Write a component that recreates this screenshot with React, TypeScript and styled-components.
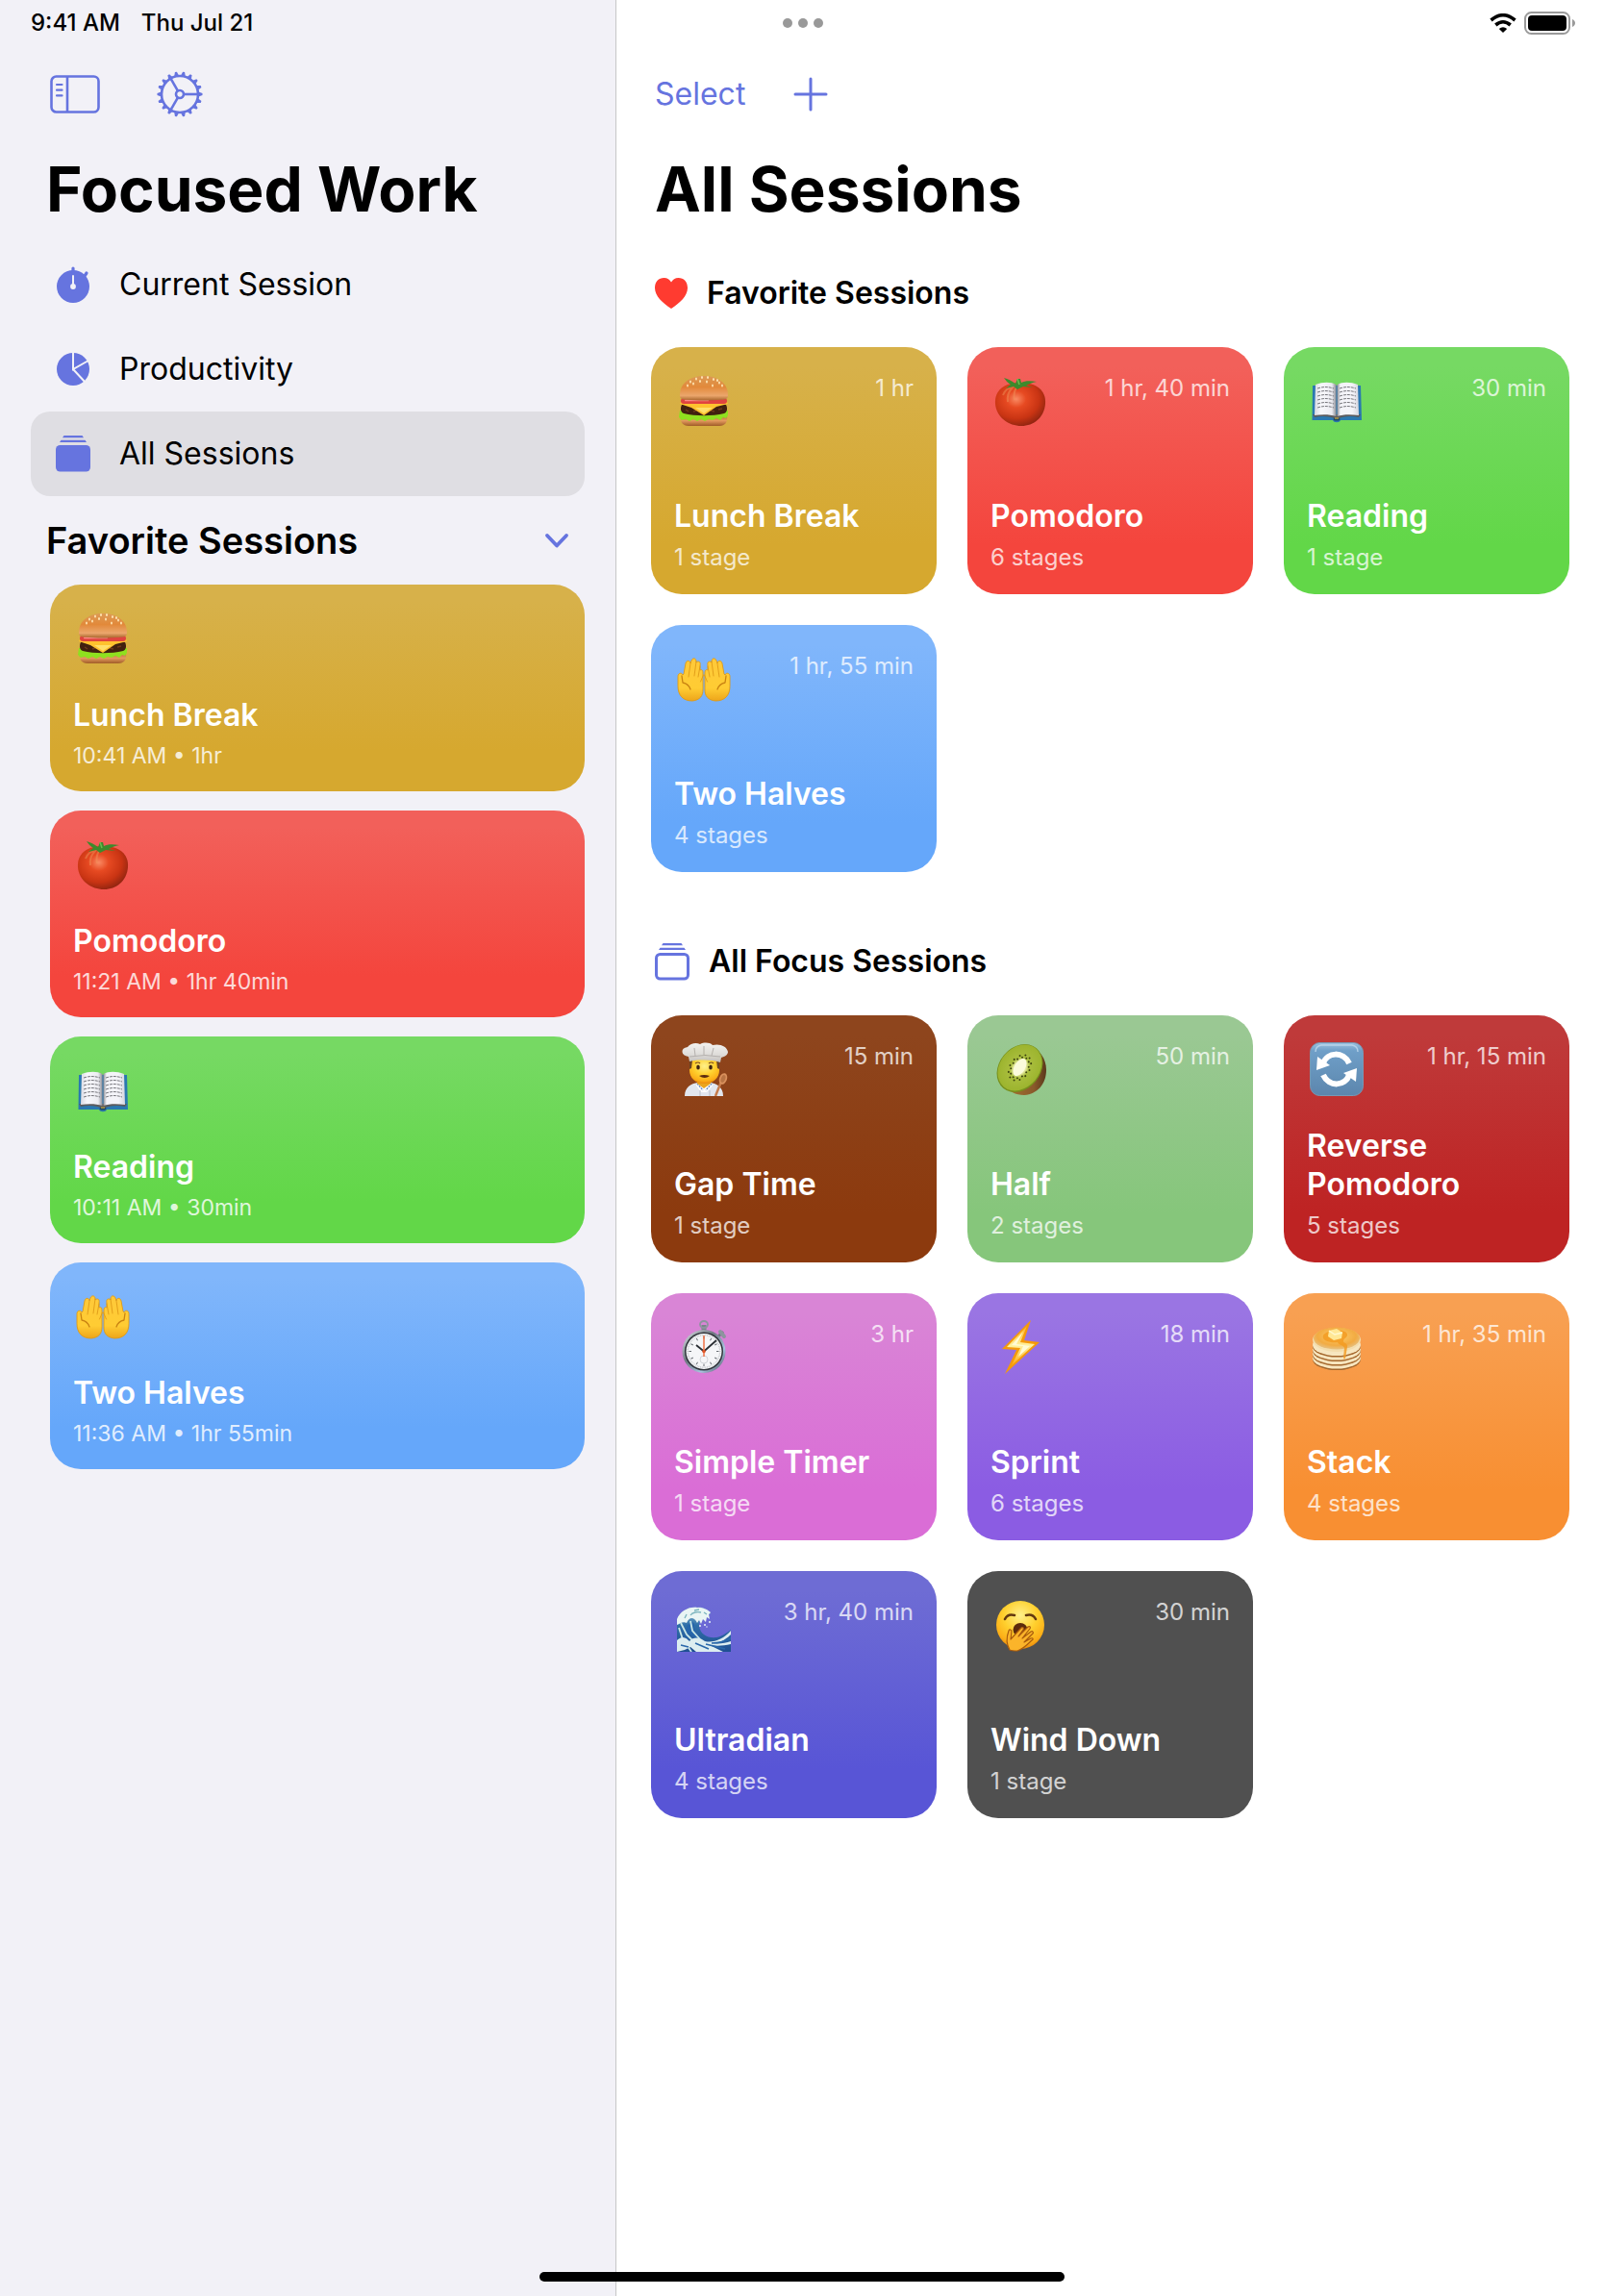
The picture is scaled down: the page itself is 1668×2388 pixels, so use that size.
import React from "react";
import styled, { createGlobalStyle } from "styled-components";

const accent = "#6674df";

const GlobalStyle = createGlobalStyle`
  *, *::before, *::after { box-sizing: border-box; }
  body {
    margin: 0;
    background: #ffffff;
    color: #000000;
    font-family: Inter, "Liberation Sans", sans-serif;
  }
  h1, h2, p, ul { margin: 0; padding: 0; }
  ul { list-style: none; }
  button { font: inherit; color: inherit; border: 0; padding: 0; background: none; cursor: pointer; }
  a { color: inherit; text-decoration: none; }
  svg { display: block; flex: none; }
`;

const Page = styled.div`
  display: grid;
  grid-template-columns: minmax(0, 641px) minmax(0, 1fr);
  grid-template-rows: 48px auto;
  min-height: 100vh;
`;

const StatusBar = styled.header`
  grid-area: 1 / 1 / 2 / 3;
  z-index: 1;
  display: grid;
  grid-template-columns: 1fr auto 1fr;
  align-items: center;
  padding: 0 30px 0 32px;
  font-size: 24px;
  font-weight: 500;
  line-height: 30px;
`;

const Clock = styled.div`
  display: flex;
  gap: 22px;
`;

const MoreButton = styled.button`
  display: flex;
  gap: 6px;
`;

const Dot = styled.span`
  width: 10px;
  height: 10px;
  border-radius: 50%;
  background: #999999;
`;

const Indicators = styled.div`
  display: flex;
  align-items: center;
  justify-content: flex-end;
  gap: 8px;
`;

const Sidebar = styled.aside`
  grid-area: 1 / 1 / 3 / 2;
  padding: 48px 32px 0;
  background: #f2f1f7;
  border-right: 1px solid #c6c6c8;
`;

const Main = styled.main`
  grid-area: 1 / 2 / 3 / 3;
  padding: 48px 36px 0;
`;

const Toolbar = styled.div<{ $inset: number; $gap: number }>`
  display: flex;
  align-items: center;
  gap: ${(p) => p.$gap}px;
  height: 100px;
  padding-left: ${(p) => p.$inset}px;
  color: ${accent};
`;

const ToolButton = styled.button`
  display: block;
  font-size: 32px;
  line-height: 40px;
  color: ${accent};
`;

const Title = styled.h1<{ $inset: number }>`
  padding-left: ${(p) => p.$inset}px;
  font-size: 64px;
  font-weight: 700;
  line-height: 98px;
  white-space: nowrap;
`;

const Nav = styled.nav`
  padding-top: 6px;
`;

const NavLink = styled.a<{ $active?: boolean }>`
  display: flex;
  align-items: center;
  gap: 30px;
  height: 88px;
  padding-left: 26px;
  border-radius: 20px;
  font-size: 32px;
  line-height: 40px;
  background: ${(p) => (p.$active ? "#dfdee3" : "transparent")};

  svg { color: ${accent}; }
`;

const Disclosure = styled.button`
  display: flex;
  align-items: center;
  justify-content: space-between;
  width: 100%;
  height: 92px;
  padding: 0 16px;
  font-size: 38px;
  font-weight: 600;
  line-height: 48px;

  svg { color: ${accent}; }
`;

const SidebarList = styled.ul`
  display: grid;
  gap: 20px;
  padding-left: 20px;
`;

const Section = styled.section`
  & + & { margin-top: 34px; }
`;

const SectionHeader = styled.div`
  display: flex;
  align-items: center;
  gap: 20px;
  height: 115px;
  padding: 2px 0 0 4px;
  color: ${accent};
`;

const SectionTitle = styled.h2`
  font-size: 32px;
  font-weight: 600;
  line-height: 40px;
  color: #000000;
`;

const CardGrid = styled.ul`
  display: grid;
  grid-template-columns: repeat(3, minmax(0, 1fr));
  gap: 32px;
`;

const Card = styled.button<{ $from: string; $to: string; $height: number }>`
  display: flex;
  flex-direction: column;
  justify-content: space-between;
  width: 100%;
  min-height: ${(p) => p.$height}px;
  padding: 28px 24px 23px;
  border-radius: 32px;
  background: linear-gradient(${(p) => p.$from} 8%, ${(p) => p.$to} 80%);
  color: #ffffff;
  text-align: left;
`;

const CardTop = styled.span`
  display: flex;
  justify-content: space-between;
  align-items: flex-start;
  padding-left: 3px;
`;

const CardText = styled.span`
  display: flex;
  flex-direction: column;
  gap: 8px;
`;

const CardName = styled.span`
  font-size: 32px;
  font-weight: 600;
  line-height: 40px;
`;

const CardMeta = styled.span`
  font-size: 24px;
  line-height: 30px;
  opacity: 0.75;
`;

const CardTime = styled.span`
  font-size: 23px;
  line-height: 28px;
  opacity: 0.8;
`;

const HomeIndicator = styled.div`
  position: fixed;
  left: 50%;
  bottom: 15px;
  width: 546px;
  height: 10px;
  margin-left: -273px;
  border-radius: 5px;
  background: #000000;
`;

const SharedDefs = styled.svg`
  position: absolute;
  width: 0;
  height: 0;
`;

/* ---------- colour ramps used by the card pictures ---------- */

const stops = (list: [number, string][]) =>
  list.map(([o, c]) => <stop key={o} offset={o} stopColor={c} />);

const Gradients = () => (
  <SharedDefs aria-hidden="true">
    <defs>
      <linearGradient id="bun" x1="0" y1="0" x2="0" y2="1">{stops([[0, "#dc9a55"], [0.45, "#e2893a"], [0.8, "#eba66c"], [1, "#a8652c"]])}</linearGradient>
      <linearGradient id="bunBase" x1="0" y1="0" x2="0" y2="1">{stops([[0, "#b86f35"], [0.5, "#e39a5e"], [1, "#a05c28"]])}</linearGradient>
      <radialGradient id="tomato" cx="0.42" cy="0.38" r="0.65">{stops([[0, "#f98a63"], [0.3, "#e74a22"], [0.7, "#c93413"], [1, "#8f2410"]])}</radialGradient>
      <linearGradient id="pageLeft">{stops([[0, "#d9d9e2"], [0.3, "#f8f8fc"], [0.8, "#ececf2"], [1, "#8d8d94"]])}</linearGradient>
      <linearGradient id="pageRight">{stops([[0, "#8d8d94"], [0.15, "#f4f4f9"], [0.7, "#f4f4f9"], [1, "#d5d5de"]])}</linearGradient>
      <linearGradient id="skin" x1="0" y1="0" x2="0" y2="1">{stops([[0, "#ffc93a"], [0.7, "#ffcc33"], [1, "#eda51a"]])}</linearGradient>
      <linearGradient id="hat" x1="0" y1="0" x2="0" y2="1">{stops([[0, "#f3f2f0"], [0.6, "#dedcd9"], [1, "#c2bfbc"]])}</linearGradient>
      <radialGradient id="kiwi" cx="0.5" cy="0.5" r="0.5">{stops([[0, "#fbfbd8"], [0.26, "#eef0b0"], [0.45, "#a9bd3d"], [1, "#9cb42e"]])}</radialGradient>
      <linearGradient id="kiwiSkin">{stops([[0, "#a5742f"], [0.7, "#8a5a2b"], [1, "#5a371a"]])}</linearGradient>
      <linearGradient id="tile" x1="0" y1="0" x2="0" y2="1">{stops([[0, "#9cc3e2"], [0.15, "#6f9fc8"], [1, "#5c86ad"]])}</linearGradient>
      <linearGradient id="steel" x1="0" y1="0" x2="1" y2="1">{stops([[0, "#e5eaf0"], [0.4, "#6f7780"], [0.7, "#a8c3df"], [1, "#3b424a"]])}</linearGradient>
      <linearGradient id="bolt" x1="0" y1="0" x2="0" y2="1">{stops([[0, "#ffb020"], [0.5, "#fff3a0"], [1, "#ffab10"]])}</linearGradient>
      <radialGradient id="pancake" cx="0.5" cy="0.4" r="0.6">{stops([[0, "#ffcf6b"], [0.7, "#f2ab42"], [1, "#e6c183"]])}</radialGradient>
      <linearGradient id="wave" x1="0" y1="0" x2="0" y2="1">{stops([[0, "#9cc9d6"], [0.4, "#2f6fa8"], [1, "#1f4f92"]])}</linearGradient>
      <radialGradient id="face" cx="0.5" cy="0.3" r="0.7">{stops([[0, "#fff08a"], [0.5, "#ffd02e"], [0.85, "#fcae17"], [1, "#e88a0c"]])}</radialGradient>
    </defs>
  </SharedDefs>
);

const Picture = ({ children }: { children: React.ReactNode }) => (
  <svg width="56" height="56" viewBox="0 0 56 56" aria-hidden="true">{children}</svg>
);

const Burger = () => (
  <Picture>
    <path d="M4 43h48c1 7-2 11-8 11H12C6 54 3 50 4 43z" fill="url(#bunBase)" />
    <path d="M3 38h50v5l-2 3-3-1-3 3-4-2-4 2-4-1-4 2-4-2-4 2-4-2-4 2-4-2-4 1-3-3z" fill="#8fe01f" />
    <path d="M5 32c8-2 38-2 46 0 2 4 1 8-2 9-12 3-30 3-42 0-3-1-4-5-2-9z" fill="#40200f" />
    <path d="M9 37l3 2M17 39l3-1M35 38l4 1M43 37l4-1" stroke="#6b3a1c" strokeWidth="1.5" />
    <path d="M4 29h48l1 2-12 3-13 9-13-8-12-4z" fill="#ffc22e" />
    <path d="M19 35l9 6 9-6z" fill="#ffdf6a" />
    <rect x="4" y="25" width="48" height="6" rx="3" fill="#e0443f" />
    <rect x="8" y="26.500" width="25" height="1.800" rx="0.900" fill="#ff8a86" />
    <path d="M3 22C3 9 14 2 28 2s25 7 25 20c0 4-3 4.500-6 4.800-12 1-26 1-38 0C6 26.500 3 26 3 22z" fill="url(#bun)" />
    <g fill="#ffe9b8">
      {[[14, 8], [20, 5], [26, 3.5], [32, 3.5], [38, 5.5], [44, 9], [17, 10], [24, 7.5], [31, 8], [37, 12], [42, 6.5], [11, 12], [47, 12]].map(([x, y]) => (
        <ellipse key={`${x}-${y}`} cx={x} cy={y} rx="0.900" ry="1.500" />
      ))}
    </g>
  </Picture>
);

const Tomato = () => (
  <Picture>
    <path d="M2 31C1 17 11 9 28 9s27 8 26 22c-1 14-12 23-25 23S3 45 2 31z" fill="url(#tomato)" />
    <path d="M10 22c2-5 6-8 10-8-4 4-6 9-5 15M24 14c-3 5-3 9-2 13" fill="none" stroke="#f0975d" strokeWidth="2" opacity="0.450" />
    <path d="M11 4c4 1 8 3 12 6l2-5 3 0 1 4c4-2 9-2 16-1-5 1-8 2-11 4l7 2-10-1-6 3-4-3-8 2 5-4c-3-2-5-4-7-7z" fill="#3c8a2c" />
    <path d="M25 5l2 6" stroke="#6cba4e" strokeWidth="1.500" />
  </Picture>
);

const Book = () => (
  <Picture>
    <path d="M3 12h50l1 36H32c-1 3-7 3-8 0H2.500z" fill="#2a78b0" />
    <path d="M5 45c8-2 17-1 23 2 6-3 15-4 23-2l2-3H3z" fill="#5b5b5e" />
    <path d="M6 11c8-3 16-3 21.500 0v33C21 42 13 42 5 43z" fill="url(#pageLeft)" />
    <path d="M50 11c-8-3-16-3-21.500 0v33c6-2 14-2 22.500-1z" fill="url(#pageRight)" />
    <g stroke="#77777d" strokeWidth="1" strokeDasharray="3 1" fill="none">
      {[14, 18, 22, 26, 30, 34].map((y) => (
        <path key={y} d={`M8 ${y + 1}c6-2 11-2 17 0M31 ${y + 1}c6-2 11-2 17 0`} />
      ))}
    </g>
    <ellipse cx="28" cy="47" rx="3.500" ry="1.600" fill="#1f4a63" />
    <path d="M26 46h4" stroke="#d4a93a" strokeWidth="1.200" />
  </Picture>
);

const Hand = () => (
  <g stroke="#df9a16" strokeWidth="0.900" strokeLinejoin="round" strokeLinecap="round">
    <path
      d="M1 25c0-3 4-4 5-1l1-1 2-11c1-4 5-3 5 0l1-3c1-3 5-3 5 1v1c2-2 5-1 4 3v5c2-1 3 0 3 3v17c0 7-3 11-11 12C6 51 1 45 1 36z"
      fill="url(#skin)"
    />
    <path d="M14 12l-2 14M20 10l-2 15M24 15l-2 11M27.500 24l-3 7" fill="none" />
    <path d="M5 25l1 7c5 1 7 4 8 7" fill="none" stroke="#c98312" strokeWidth="1.300" />
  </g>
);

const Hands = () => (
  <Picture>
    <Hand />
    <g transform="matrix(-1 0 0 1 56 0)"><Hand /></g>
  </Picture>
);

const Chef = () => (
  <Picture>
    <path d="M8 56c0-9 6-13 14-14h12c8 1 14 5 14 14z" fill="#e2e6ee" />
    <path d="M21 42l7 6 8-6 1 3-6 7h-6l-5-7z" fill="#ffffff" />
    <path d="M21 43l6 7M36 43l-6 7" stroke="#6f8fc4" strokeWidth="1.500" strokeDasharray="2 1" />
    <path d="M24 50v6M34 50v6" stroke="#b7bdca" />
    <path d="M21 36h14v7l-7 5-7-5z" fill="#eba51d" />
    <path d="M13 17h31v12c0 8-6 14-15.500 14S13 37 13 29z" fill="url(#face)" />
    <path d="M13 19h3l-1 8-2 1zM44 19h-3l1 8 2 1z" fill="#6b4424" />
    <ellipse cx="22" cy="26" rx="1.800" ry="2.600" fill="#3e2412" />
    <ellipse cx="35" cy="26" rx="1.800" ry="2.600" fill="#3e2412" />
    <path d="M19 22q3-2 5 0M33 22q3-2 5 0" stroke="#7a4a1b" fill="none" strokeWidth="1.200" />
    <path d="M23 35q5-2 11 0-5 4-11 0z" fill="#5b2a10" />
    <path d="M13 20l-1-5C4 14 3 6 11 5c3-4 9-5 13-3 4-2 10-2 13 1 7-2 15 1 16 7 0 3-3 5-7 6l-1 5c-10-3-22-3-32-1z" fill="url(#hat)" />
    <path d="M13 15q16-3 32 0M18 6l1 8M28 4v9M38 6l-2 8" fill="none" stroke="#b5b1ae" />
    <path d="M46 41l-6 15" stroke="#c77c4c" strokeWidth="2.500" />
    <ellipse cx="48" cy="38" rx="4" ry="6" transform="rotate(20 48 38)" fill="#d9905c" />
    <ellipse cx="48" cy="38" rx="2.200" ry="4" transform="rotate(20 48 38)" fill="#b87343" />
  </Picture>
);

const Kiwi = () => (
  <Picture>
    <path d="M36 3c12 4 19 14 19 26 0 14-9 25-23 26-9 0-16-4-20-10z" fill="url(#kiwiSkin)" />
    <ellipse cx="27.500" cy="27" rx="21.500" ry="27" transform="rotate(40 27.500 27)" fill="#77901c" />
    <ellipse cx="27.500" cy="26.500" rx="20.500" ry="26" transform="rotate(40 27.500 26.500)" fill="url(#kiwi)" />
    <g fill="#3c430f" transform="rotate(35 27.500 26.500)">
      {Array.from({ length: 24 }, (_, i) => {
        const a = (i * Math.PI) / 12;
        const r = i % 2 ? 1 : 0.82;
        return <circle key={i} cx={27.5 + Math.sin(a) * 10 * r} cy={26.5 - Math.cos(a) * 14.5 * r} r="1" />;
      })}
    </g>
    <ellipse cx="27.500" cy="26" rx="5.500" ry="10" transform="rotate(32 27.500 26)" fill="#fbfbdc" />
  </Picture>
);

const Repeat = () => (
  <Picture>
    <rect x="0.500" y="0.500" width="55" height="55" rx="10" fill="url(#tile)" stroke="#7898b3" />
    <path d="M6 10q0-6 6-7h32q6 1 6 7" fill="none" stroke="#c9e0f1" strokeWidth="1.500" opacity="0.700" />
    <g fill="none" stroke="#ffffff" strokeWidth="6">
      <path d="M14 22C18 10 35 9 41 22" />
      <path d="M41 34C37 46 20 47 14 34" />
    </g>
    <path d="M7 29l1-14 13 9z" fill="#ffffff" />
    <path d="M49 27l-1 14-13-9z" fill="#ffffff" />
  </Picture>
);

const Stopwatch = () => (
  <Picture>
    <rect x="25.500" y="5" width="5" height="7" fill="#7b838c" />
    <ellipse cx="28" cy="4.500" rx="4" ry="3.500" fill="none" stroke="#8d959e" strokeWidth="1.800" />
    <path d="M42 18l6-6" stroke="#6c747d" strokeWidth="3" />
    <path d="M45 12l4 5" stroke="#8d959e" strokeWidth="4" strokeLinecap="round" />
    <circle cx="28" cy="32.500" r="22.500" fill="url(#steel)" />
    <circle cx="28" cy="32.500" r="20" fill="#30353b" />
    <circle cx="28" cy="32.500" r="18.500" fill="#f5f6f8" />
    <g stroke="#6a6f75" strokeWidth="1">
      {Array.from({ length: 12 }, (_, i) => (
        <path key={i} d="M28 17v2.500" transform={`rotate(${i * 30} 28 32.500)`} />
      ))}
    </g>
    <g stroke="#9a9fa5" strokeWidth="0.500">
      {Array.from({ length: 60 }, (_, i) => (
        <path key={i} d="M28 15v1.500" transform={`rotate(${i * 6} 28 32.500)`} />
      ))}
    </g>
    <circle cx="28" cy="41" r="4" fill="none" stroke="#c9ccd1" strokeWidth="0.800" />
    <path d="M20 26l8 6.500L41 21" fill="none" stroke="#2a2e33" strokeWidth="1.800" />
    <path d="M28 38V16" stroke="#f0693a" strokeWidth="1.400" />
    <circle cx="28" cy="32.500" r="1.800" fill="#e0582a" />
  </Picture>
);

const Bolt = () => (
  <Picture>
    <path d="M39 0L9 30l15 1L12 56l36-33-16-2z" fill="#f59a0a" />
    <path d="M35 6L14 28l14 1-9 18 24-22-15-2z" fill="url(#bolt)" />
    <path d="M31 12L19 26l12 1-5 11 12-11-14-2z" fill="#fffbd6" />
  </Picture>
);

const Pancakes = () => (
  <Picture>
    <ellipse cx="28" cy="42" rx="22" ry="10" fill="#8a8b86" />
    {[39, 34.5, 30, 25.5].map((y) => (
      <g key={y}>
        <ellipse cx="28" cy={y + 2} rx="25" ry="11" fill="#a5672c" />
        <ellipse cx="28" cy={y + 0.5} rx="25" ry="11" fill="#f7e6bf" />
      </g>
    ))}
    <ellipse cx="28" cy="20.500" rx="25" ry="12.500" fill="#f3ddad" />
    <ellipse cx="28" cy="19" rx="24" ry="11.500" fill="url(#pancake)" />
    <path d="M14 16c2-4 8-5 12-4 6-3 14 0 13 4-1 3-4 3-4 6 0 2 5 2 4 6l-2 12c-1 1-2 0-2-1l1-10c-1-3-6-3-7-6-6 1-17-1-15-7z" fill="#f39a1f" opacity="0.800" />
    <path d="M20 11l8-2 6 4-1 6-8 2-6-4z" fill="#ffe896" />
    <path d="M20 11l6 4 8-2" fill="none" stroke="#fff8cf" strokeWidth="1.500" />
  </Picture>
);

const Wave = () => (
  <Picture>
    <path d="M0 56V24C2 15 12 8 21 10c5-1 11 2 14 6-2 1-3 3-5 2-4 2-7 5-7 11 1 9 9 13 18 12 6-1 11-5 15-8v23z" fill="url(#wave)" />
    <path d="M0 28V22C3 14 12 9 21 10c6 0 11 2 14 5l-2 2 1 5-3-2-1 5-3-3-2 5-2-4-2 3c-3-6-8-7-11 0-4-2-7 1-10 2z" fill="#e9f5f4" />
    <path d="M14 18c2-3 7-4 11-3M8 21l2-4M18 13l5-1M28 15l3 2" fill="none" stroke="#79b3bd" strokeWidth="1.300" />
    <path d="M10 31c2-6 6-7 8-4-1 7 3 13 9 16-6 0-12-3-14-7-3 3-3 6-1 9-4-4-4-9-2-14z" fill="#2666ab" />
    <path d="M2 31l4 12 9 13M4 26l6 12 12 12M14 24l2 10 8 9" fill="none" stroke="#c9e7e5" strokeWidth="1.800" />
    <path d="M0 44c6-6 10-2 13 1 5-6 12-3 16 0 9 2 19-2 27-11v4c-7 7-13 9-20 9 8 1 14 0 20-2v3c-8 2-16 2-22 1l14 7H20l-6-5-6 3-8 2z" fill="#dcedf0" />
    <path d="M19 47l14 6M30 48l20 5M36 47c8 0 14-2 20-5M4 49l8 2" fill="none" stroke="#2a68aa" strokeWidth="1.600" />
    <g fill="#e9f5f4">
      <circle cx="34" cy="25" r="1" /><circle cx="29" cy="28" r="1" /><circle cx="24" cy="29" r="1" /><circle cx="31" cy="30" r="0.700" />
    </g>
  </Picture>
);

const Yawn = () => (
  <Picture>
    <circle cx="28" cy="28" r="25" fill="url(#face)" />
    <path d="M12 22q3-6 10-4M34 18q7-2 10 4" fill="none" stroke="#63390f" strokeWidth="2.600" strokeLinecap="round" />
    <ellipse cx="28" cy="33" rx="7.500" ry="7" fill="#5b2a0c" />
    <path
      d="M17 54c-3-5-4-12-1-20 1-2 3-1 3 1l-1 8 11-12c2-1 3 0 2 2l-5 7 10-10c2-1 3 0 2 2l-8 10 9-7c2-1 3 1 2 2l-9 9 7-4c2-1 3 1 1 2-5 5-9 9-15 11-3 0-6 0-8-1z"
      fill="#fbb42a"
      stroke="#a85a0c"
      strokeWidth="1.200"
      strokeLinejoin="round"
    />
  </Picture>
);

/* ---------- line icons ---------- */

const PanelIcon = () => (
  <svg width="52" height="40" viewBox="0 0 52 40" fill="none" stroke="currentColor" strokeWidth="2.600" aria-hidden="true">
    <rect x="1.500" y="1.500" width="49" height="37" rx="5" />
    <path d="M18 1.500v37" />
    <path d="M7 10h5.500M7 15.700h5.500M7 21.400h5.500" strokeWidth="2.200" strokeLinecap="round" />
  </svg>
);

const GearIcon = () => (
  <svg width="48" height="48" viewBox="-24 -24 48 48" fill="none" stroke="currentColor" strokeWidth="2.600" aria-hidden="true">
    <circle r="19" />
    <circle r="4" />
    {[0, 120, 240].map((a) => (
      <path key={a} d="M4 0H19" transform={`rotate(${a})`} />
    ))}
    {Array.from({ length: 18 }, (_, i) => (
      <path key={i} d="M19.500-2.400L23.500-1V1L19.500 2.400z" fill="currentColor" stroke="none" transform={`rotate(${i * 20})`} />
    ))}
  </svg>
);

const PlusIcon = () => (
  <svg width="36" height="36" viewBox="0 0 36 36" stroke="currentColor" strokeWidth="3" strokeLinecap="round" aria-hidden="true">
    <path d="M18 2v32M2 18h32" />
  </svg>
);

const TimerIcon = () => (
  <svg width="36" height="40" viewBox="0 0 36 40" aria-hidden="true">
    <circle cx="18" cy="22" r="17" fill="currentColor" />
    <path d="M18 3v4M30 11l2-3" stroke="currentColor" strokeWidth="3.200" strokeLinecap="round" />
    <path d="M18 11v11" stroke="#f2f1f7" strokeWidth="2" strokeLinecap="round" />
    <circle cx="18" cy="22" r="2.900" fill="#f2f1f7" />
  </svg>
);

const PieIcon = () => (
  <svg width="36" height="40" viewBox="0 0 36 40" aria-hidden="true">
    <circle cx="18" cy="20" r="17" fill="currentColor" />
    <path d="M18 2v18L34 11M18 20l13 14" fill="none" stroke="#f2f1f7" strokeWidth="2" />
  </svg>
);

const StackIcon = ({ filled }: { filled?: boolean }) => (
  <svg width="36" height="40" viewBox="0 0 36 40" fill="currentColor" aria-hidden="true">
    <path d="M8.500 1h19l1.500 2.300H7zM5.500 5.700h25l1.500 2.300H4z" />
    {filled ? (
      <rect x="0" y="11" width="36" height="27.500" rx="4.500" />
    ) : (
      <rect x="1.500" y="12.500" width="33" height="25.500" rx="4" fill="none" stroke="currentColor" strokeWidth="3" />
    )}
  </svg>
);

const ChevronIcon = () => (
  <svg width="26" height="18" viewBox="0 0 26 18" fill="none" stroke="currentColor" strokeWidth="3.800" strokeLinecap="round" strokeLinejoin="round" aria-hidden="true">
    <path d="M3 4l10 10.500L23 4" />
  </svg>
);

const HeartIcon = () => (
  <svg width="34" height="34" viewBox="0 0 34 34" aria-hidden="true">
    <path d="M17 33C8 27 0 20 0 11.500 0 5 4 1 9.500 1c3.500 0 6 1.800 7.500 4.500C18.500 2.800 21 1 24.500 1 30 1 34 5 34 11.500 34 20 26 27 17 33z" fill="#ff3b30" />
  </svg>
);

const WifiIcon = () => (
  <svg width="28" height="20" viewBox="0 0 28 20" fill="none" stroke="#000000" aria-hidden="true">
    <path d="M1.500 7Q14-3.500 26.500 7" strokeWidth="3.600" />
    <path d="M6.300 12Q14 5.500 21.700 12" strokeWidth="3.600" />
    <path d="M9.800 16Q14 12.500 18.200 16L14 20z" fill="#000000" stroke="none" />
  </svg>
);

const BatteryIcon = () => (
  <svg width="53" height="24" viewBox="0 0 53 24" aria-hidden="true">
    <rect x="1" y="1" width="46" height="22" rx="6.500" fill="none" stroke="#9a9a9a" strokeWidth="2" />
    <rect x="4" y="4" width="40" height="16" rx="4" fill="#000000" />
    <path d="M50 8c4 1.500 4 6.500 0 8z" fill="#9a9a9a" />
  </svg>
);

/* ---------- data ---------- */

type Session = {
  name: string;
  picture: React.ComponentType;
  from: string;
  to: string;
  length: string;
  stages: string;
  time?: string;
};

const favorites: Session[] = [
  { name: "Lunch Break", picture: Burger, from: "#d7b14a", to: "#d6a82f", length: "1 hr", stages: "1 stage", time: "10:41 AM • 1hr" },
  { name: "Pomodoro", picture: Tomato, from: "#f2605a", to: "#f4453d", length: "1 hr, 40 min", stages: "6 stages", time: "11:21 AM • 1hr 40min" },
  { name: "Reading", picture: Book, from: "#76d963", to: "#62d748", length: "30 min", stages: "1 stage", time: "10:11 AM • 30min" },
  { name: "Two Halves", picture: Hands, from: "#80b6fb", to: "#65a7fa", length: "1 hr, 55 min", stages: "4 stages", time: "11:36 AM • 1hr 55min" },
];

const focusSessions: Session[] = [
  { name: "Gap Time", picture: Chef, from: "#8e451d", to: "#8c3a0e", length: "15 min", stages: "1 stage" },
  { name: "Half", picture: Kiwi, from: "#9ac893", to: "#86c67b", length: "50 min", stages: "2 stages" },
  { name: "Reverse Pomodoro", picture: Repeat, from: "#bf3a3a", to: "#be2323", length: "1 hr, 15 min", stages: "5 stages" },
  { name: "Simple Timer", picture: Stopwatch, from: "#d985d6", to: "#da6dd6", length: "3 hr", stages: "1 stage" },
  { name: "Sprint", picture: Bolt, from: "#9a75e3", to: "#8b5ce3", length: "18 min", stages: "6 stages" },
  { name: "Stack", picture: Pancakes, from: "#f8a052", to: "#f88f32", length: "1 hr, 35 min", stages: "4 stages" },
  { name: "Ultradian", picture: Wave, from: "#6e6cd4", to: "#5855d6", length: "3 hr, 40 min", stages: "4 stages" },
  { name: "Wind Down", picture: Yawn, from: "#505050", to: "#505050", length: "30 min", stages: "1 stage" },
];

const SessionCards = ({ sessions }: { sessions: Session[] }) => (
  <CardGrid>
    {sessions.map(({ picture: Art, ...s }) => (
      <li key={s.name}>
        <Card type="button" $from={s.from} $to={s.to} $height={257}>
          <CardTop>
            <Art />
            <CardMeta>{s.length}</CardMeta>
          </CardTop>
          <CardText>
            <CardName>{s.name}</CardName>
            <CardMeta>{s.stages}</CardMeta>
          </CardText>
        </Card>
      </li>
    ))}
  </CardGrid>
);

export default function App() {
  const [open, setOpen] = React.useState(true);
  return (
    <Page>
      <GlobalStyle />
      <Gradients />
      <StatusBar>
        <Clock>
          <span>9:41 AM</span>
          <span>Thu Jul 21</span>
        </Clock>
        <MoreButton type="button" aria-label="Multitasking">
          <Dot /><Dot /><Dot />
        </MoreButton>
        <Indicators>
          <WifiIcon />
          <BatteryIcon />
        </Indicators>
      </StatusBar>

      <Sidebar>
        <Toolbar $inset={20} $gap={59}>
          <ToolButton type="button" aria-label="Toggle sidebar"><PanelIcon /></ToolButton>
          <ToolButton type="button" aria-label="Settings"><GearIcon /></ToolButton>
        </Toolbar>
        <Title as="h2" $inset={16}>Focused Work</Title>
        <Nav>
          <NavLink href="#current"><TimerIcon />Current Session</NavLink>
          <NavLink href="#productivity"><PieIcon />Productivity</NavLink>
          <NavLink href="#all" $active aria-current="page"><StackIcon filled />All Sessions</NavLink>
        </Nav>
        <Disclosure type="button" aria-expanded={open} onClick={() => setOpen(!open)}>
          Favorite Sessions
          <ChevronIcon />
        </Disclosure>
        {open && (
          <SidebarList>
            {favorites.map(({ picture: Art, ...s }) => (
              <li key={s.name}>
                <Card type="button" $from={s.from} $to={s.to} $height={215}>
                  <CardTop><Art /></CardTop>
                  <CardText>
                    <CardName>{s.name}</CardName>
                    <CardTime>{s.time}</CardTime>
                  </CardText>
                </Card>
              </li>
            ))}
          </SidebarList>
        )}
      </Sidebar>

      <Main>
        <Toolbar $inset={4} $gap={50}>
          <ToolButton type="button">Select</ToolButton>
          <ToolButton type="button" aria-label="Add session"><PlusIcon /></ToolButton>
        </Toolbar>
        <Title $inset={4}>All Sessions</Title>
        <Section>
          <SectionHeader>
            <HeartIcon />
            <SectionTitle>Favorite Sessions</SectionTitle>
          </SectionHeader>
          <SessionCards sessions={favorites} />
        </Section>
        <Section>
          <SectionHeader>
            <StackIcon />
            <SectionTitle>All Focus Sessions</SectionTitle>
          </SectionHeader>
          <SessionCards sessions={focusSessions} />
        </Section>
      </Main>
      <HomeIndicator />
    </Page>
  );
}
